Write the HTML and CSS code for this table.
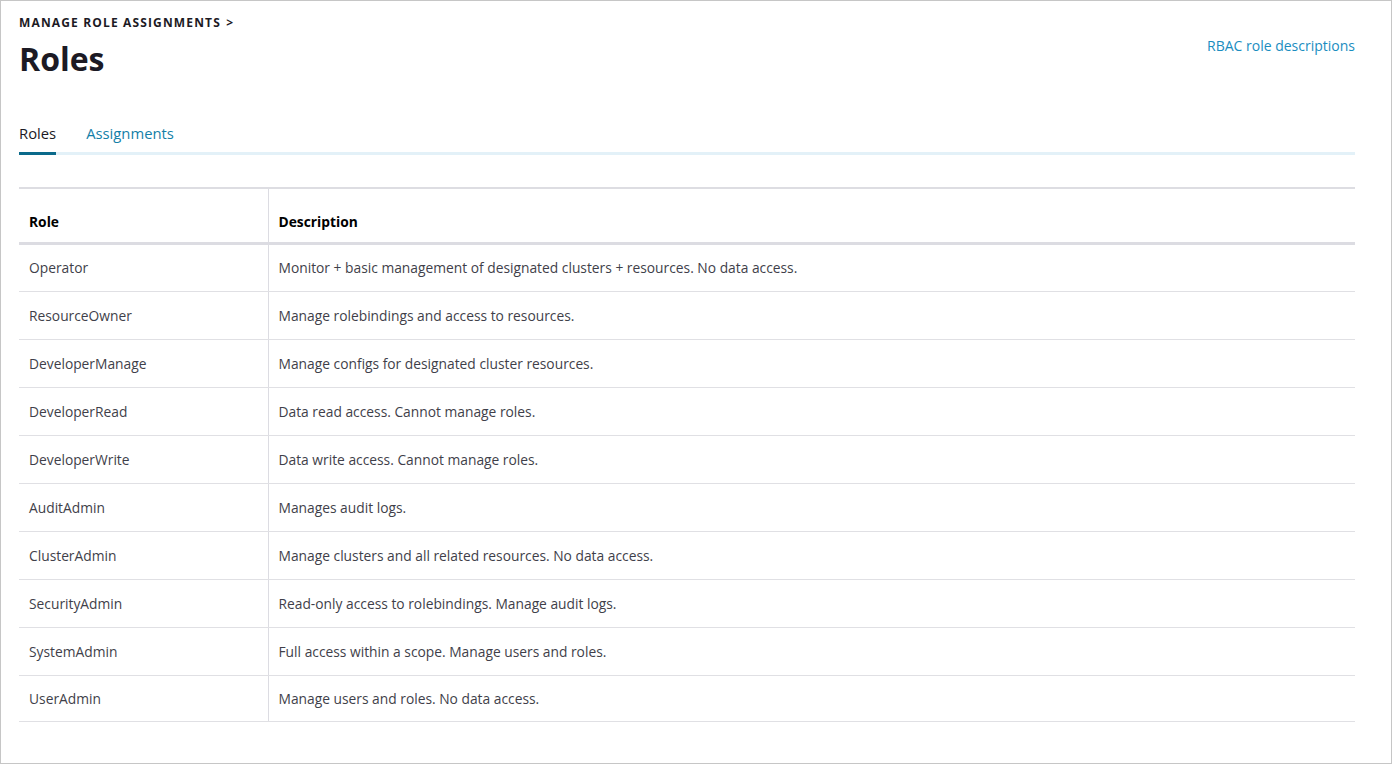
FILE: index.html
```html
<!DOCTYPE html>
<html>
<head>
<meta charset="utf-8">
<link rel="stylesheet" href="styles.css">
</head>
<body>
<div class="page">
  <header class="head">
    <div class="head-left">
      <div class="crumb">MANAGE ROLE ASSIGNMENTS <span class="chev">&gt;</span></div>
      <h1 class="title">Roles</h1>
    </div>
    <a class="doc-link" href="#">RBAC role descriptions</a>
  </header>
  <nav class="tabs">
    <span class="tab active">Roles</span>
    <span class="tab">Assignments</span>
  </nav>
  <table class="roles">
    <thead>
      <tr><th class="c1">Role</th><th>Description</th></tr>
    </thead>
    <tbody>
      <tr><td class="c1">Operator</td><td>Monitor + basic management of designated clusters + resources. No data access.</td></tr>
      <tr><td class="c1">ResourceOwner</td><td>Manage rolebindings and access to resources.</td></tr>
      <tr><td class="c1">DeveloperManage</td><td>Manage configs for designated cluster resources.</td></tr>
      <tr><td class="c1">DeveloperRead</td><td>Data read access. Cannot manage roles.</td></tr>
      <tr><td class="c1">DeveloperWrite</td><td>Data write access. Cannot manage roles.</td></tr>
      <tr><td class="c1">AuditAdmin</td><td>Manages audit logs.</td></tr>
      <tr><td class="c1">ClusterAdmin</td><td>Manage clusters and all related resources. No data access.</td></tr>
      <tr><td class="c1">SecurityAdmin</td><td>Read-only access to rolebindings. Manage audit logs.</td></tr>
      <tr><td class="c1">SystemAdmin</td><td>Full access within a scope. Manage users and roles.</td></tr>
      <tr class="last"><td class="c1">UserAdmin</td><td>Manage users and roles. No data access.</td></tr>
    </tbody>
  </table>
</div>
</body>
</html>
```

FILE: styles.css
```css
* { box-sizing: border-box; }
html, body { margin: 0; padding: 0; background: #fff; }
body {
  font-family: "Open Sans", "Noto Sans", sans-serif;
  color: #1c1a24;
}
.page {
  width: 1392px;
  height: 764px;
  border: 1px solid #c6c6c6;
  padding: 14px 36px 0 18px;
}
.head {
  display: flex;
  justify-content: space-between;
  align-items: flex-start;
}
.crumb {
  font-size: 12px;
  font-weight: 700;
  letter-spacing: 1.15px;
  line-height: 16px;
  color: #1c1a24;
}
.chev { margin-left: 1px; }
.title {
  margin: 7px 0 0;
  font-size: 32px;
  font-weight: 700;
  line-height: 42px;
  color: #1c1a24;
}
.doc-link {
  margin-top: 22px;
  font-size: 14px;
  line-height: 18px;
  color: #1a8dbf;
  text-decoration: none;
}
.tabs {
  margin-top: 43px;
  display: flex;
  gap: 30px;
  border-bottom: 3px solid #e3f1f8;
}
.tab {
  font-size: 14.8px;
  line-height: 20px;
  padding-bottom: 9px;
  color: #137fa8;
  margin-bottom: -3px;
  border-bottom: 3px solid transparent;
}
.tab.active {
  color: #1c1a24;
  border-bottom-color: #0b6a8b;
}
.roles {
  margin-top: 32px;
  width: 100%;
  border-collapse: collapse;
  border-top: 2px solid #dddde2;
  font-size: 13.8px;
}
.roles th {
  text-align: left;
  font-weight: 700;
  color: #000;
  height: 55px;
  padding: 0 10px 11px;
  vertical-align: bottom;
  border-bottom: 3px solid #dcdce2;
}
.roles td {
  height: 48px;
  padding: 0 10px;
  color: #3f3f4a;
  border-bottom: 1px solid #e0e0e4;
}
.roles tr.last td { height: 46px; }
.roles .c1 {
  width: 249px;
  border-right: 1px solid #dcdce2;
}
```
